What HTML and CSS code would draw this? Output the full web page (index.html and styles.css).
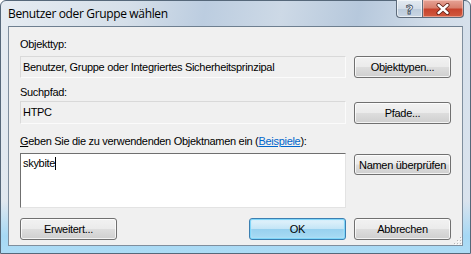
FILE: index.html
```html
<!DOCTYPE html>
<html>
<head>
<meta charset="utf-8">
<link rel="stylesheet" href="styles.css">
</head>
<body>
<div class="window">
  <div class="titlebar">
    <span class="title">Benutzer oder Gruppe wählen</span>
    <div class="caption">
      <div class="cap help"><span class="qmark">?</span></div>
      <div class="cap close">
        <svg width="16" height="12" viewBox="0 0 16 12">
          <path d="M3.5 2 L12.5 10 M12.5 2 L3.5 10" fill="none" stroke="#5a1a10" stroke-width="4" stroke-linecap="round"/>
          <path d="M3.5 2 L12.5 10 M12.5 2 L3.5 10" fill="none" stroke="#fff" stroke-width="2.4" stroke-linecap="round"/>
        </svg>
      </div>
    </div>
  </div>
  <div class="client">
    <div class="label l1">Objekttyp:</div>
    <div class="row r1">
      <div class="field">Benutzer, Gruppe oder Integriertes Sicherheitsprinzipal</div>
      <button class="btn">Objekttypen...</button>
    </div>
    <div class="label l2">Suchpfad:</div>
    <div class="row r2">
      <div class="field">HTPC</div>
      <button class="btn">Pfade...</button>
    </div>
    <div class="label l3"><u>G</u>eben Sie die zu verwendenden Objektnamen ein (<a class="link">Beispiele</a>):</div>
    <div class="row r3">
      <div class="edit">skybite<span class="caret"></span></div>
      <button class="btn">Namen überprüfen</button>
    </div>
    <div class="row bottom">
      <button class="btn">Erweitert...</button>
      <button class="btn ok">OK</button>
      <button class="btn">Abbrechen</button>
    </div>
    <svg class="grip" width="9" height="9" viewBox="0 0 9 9">
      <g fill="#b8b8b8">
        <rect x="7" y="1" width="1" height="1"/>
        <rect x="4" y="4" width="1" height="1"/><rect x="7" y="4" width="1" height="1"/>
        <rect x="1" y="7" width="1" height="1"/><rect x="4" y="7" width="1" height="1"/><rect x="7" y="7" width="1" height="1"/>
      </g>
      <g fill="#ffffff">
        <rect x="8" y="2" width="1" height="1"/>
        <rect x="5" y="5" width="1" height="1"/><rect x="8" y="5" width="1" height="1"/>
        <rect x="2" y="8" width="1" height="1"/><rect x="5" y="8" width="1" height="1"/><rect x="8" y="8" width="1" height="1"/>
      </g>
    </svg>
  </div>
</div>
</body>
</html>
```

FILE: styles.css
```css
* { box-sizing: border-box; }
html, body { margin: 0; padding: 0; }
body {
  width: 471px;
  height: 254px;
  overflow: hidden;
  font-family: "Liberation Sans", Arial, sans-serif;
  font-size: 11px;
  letter-spacing: -0.3px;
  color: #000;
}
.window {
  width: 471px;
  height: 254px;
  border: 1px solid #56687a;
  border-radius: 6px 6px 0 0;
  display: flex;
  flex-direction: column;
  background:
    linear-gradient(180deg, rgba(255,255,255,0) 0, rgba(255,255,255,0) 200px, rgba(160,215,245,0.9) 235px, #aedcf5 254px),
    linear-gradient(100deg, #e6ecf2 0%, #d5dfe9 25%, #bccde0 40%, #cdd9e6 55%, #b6c8dc 70%, #d2dde9 85%, #dbe4ee 100%);
}
.titlebar {
  height: 25px;
  display: flex;
  justify-content: space-between;
  align-items: flex-start;
  padding-left: 7px;
}
.title {
  font-family: "Open Sans", "Liberation Sans", sans-serif;
  font-size: 12px;
  letter-spacing: -0.35px;
  line-height: 16px;
  margin-top: 5px;
  color: #000;
}
.caption {
  display: flex;
  margin-right: 6px;
  margin-top: -1px;
}
.cap {
  height: 18px;
  border: 1px solid #5d6b7b;
  border-top: none;
  display: flex;
  align-items: center;
  justify-content: center;
}
.help {
  width: 26px;
  border-radius: 0 0 0 4px;
  border-right: none;
  background: linear-gradient(180deg, #e3eaf1 0%, #d3dde8 50%, #bccbdb 51%, #c9d6e4 100%);
  box-shadow: inset 0 0 0 1px rgba(255,255,255,0.6);
}
.qmark {
  font-family: "DejaVu Sans", sans-serif;
  font-weight: bold;
  font-size: 13px;
  line-height: 13px;
  letter-spacing: 0;
  color: #fff;
  -webkit-text-stroke: 0.8px #3d4a58;
  margin-top: 1px;
}
.close {
  width: 42px;
  border-radius: 0 0 4px 0;
  background: linear-gradient(180deg, #e6a396 0%, #d8806e 45%, #c7432d 55%, #d15a3f 100%);
  box-shadow: inset 0 0 0 1px rgba(255,220,210,0.5);
}
.client {
  flex: 1;
  margin: 0 7px 7px 7px;
  border: 1px solid #7f8e9d;
  border-top-color: #6e7f90;
  background: #f0f0f0;
  padding: 11px 11px 0 11px;
  display: flex;
  flex-direction: column;
  position: relative;
}
.label {
  line-height: 13px;
  height: 13px;
  white-space: nowrap;
}
.l1 { margin-bottom: 5px; }
.l2 { margin-top: 8px; margin-bottom: 2px; }
.l3 { margin-top: 11px; margin-bottom: 5px; }
.row {
  display: flex;
  align-items: center;
  gap: 8px;
}
.field {
  flex: 1;
  height: 22px;
  line-height: 20px;
  padding-left: 2px;
  border: 1px solid #d9d9d9;
  border-right-color: #fbfbfb;
  border-bottom-color: #fbfbfb;
  background: #f0f0f0;
  white-space: nowrap;
}
.r2 .field { height: 23px; line-height: 21px; }
.btn {
  width: 97px;
  height: 22px;
  padding: 0;
  font-family: "Liberation Sans", Arial, sans-serif;
  font-size: 11px;
  letter-spacing: -0.3px;
  color: #000;
  border: 1px solid #707070;
  border-radius: 3px;
  background: linear-gradient(180deg, #f2f2f2 0%, #ebebeb 48%, #dddddd 52%, #cfcfcf 100%);
  box-shadow: inset 0 0 0 1px rgba(255,255,255,0.75);
}
.r3 { align-items: flex-start; }
.r3 .btn { margin-top: 1px; height: 21px; }
.edit {
  flex: 1;
  height: 55px;
  background: #fff;
  border: 1px solid #e3e3e3;
  border-top-color: #6f6f6f;
  border-left-color: #6f6f6f;
  padding: 3px 0 0 2px;
  line-height: 13px;
}
.caret {
  display: inline-block;
  width: 1px;
  height: 13px;
  background: #000;
  vertical-align: top;
}
.link {
  color: #0066cc;
  text-decoration: underline;
}
.bottom {
  margin-top: 10px;
}
.bottom .btn:first-child { margin-right: auto; }
.ok {
  border-color: #3c7fb1;
  background: linear-gradient(180deg, #e5f4fc 0%, #c4e5f6 48%, #98d1ef 52%, #a9dbf4 100%);
  box-shadow: inset 0 0 0 1px #80d6f9, inset 0 0 2px 1px #b8e8fb;
}
.grip {
  position: absolute;
  right: 0;
  bottom: 0;
}
```
